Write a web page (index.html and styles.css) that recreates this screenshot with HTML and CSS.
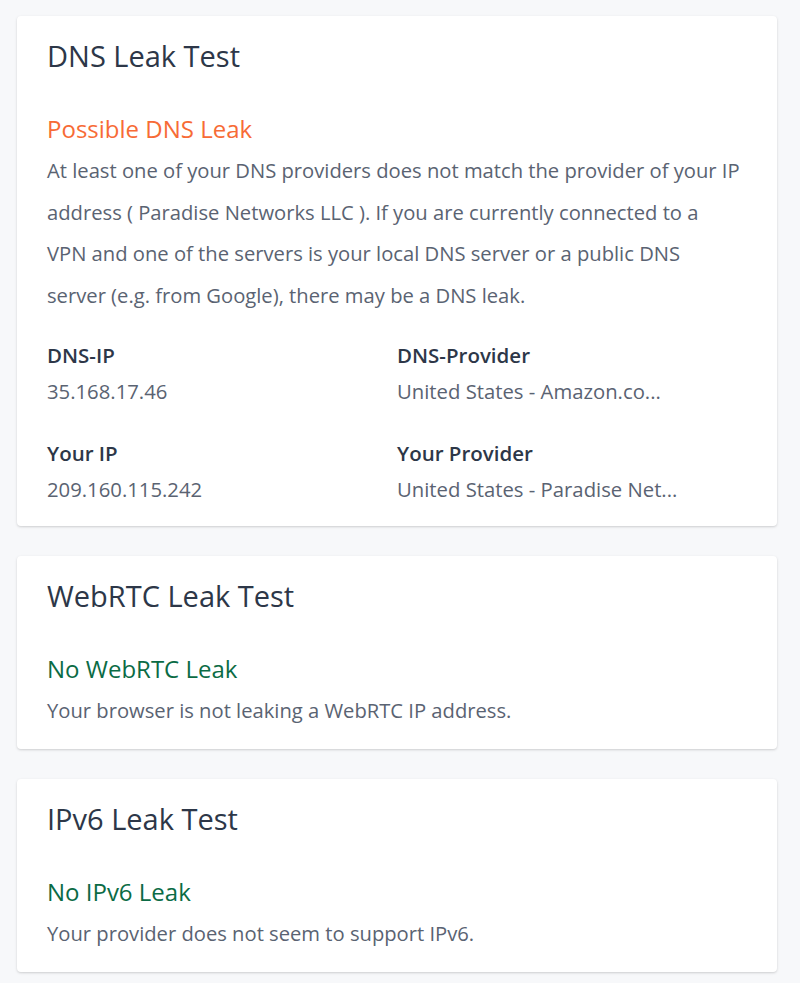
FILE: index.html
```html
<!DOCTYPE html>
<html lang="en">
<head>
<meta charset="utf-8">
<title>Leak Tests</title>
<link rel="stylesheet" href="styles.css">
</head>
<body>
<main class="page">
  <section class="card">
    <h2 class="card-title">DNS Leak Test</h2>
    <h3 class="status status-warn">Possible DNS Leak</h3>
    <p class="text">At least one of your DNS providers does not match the provider of your IP<br>address ( Paradise Networks LLC ). If you are currently connected to a<br>VPN and one of the servers is your local DNS server or a public DNS<br>server (e.g. from Google), there may be a DNS leak.</p>
    <div class="grid">
      <div class="item">
        <div class="label">DNS-IP</div>
        <div class="value">35.168.17.46</div>
      </div>
      <div class="item">
        <div class="label">DNS-Provider</div>
        <div class="value">United States - Amazon.co...</div>
      </div>
      <div class="item">
        <div class="label">Your IP</div>
        <div class="value">209.160.115.242</div>
      </div>
      <div class="item">
        <div class="label">Your Provider</div>
        <div class="value">United States - Paradise Net...</div>
      </div>
    </div>
  </section>
  <section class="card">
    <h2 class="card-title">WebRTC Leak Test</h2>
    <h3 class="status status-ok">No WebRTC Leak</h3>
    <p class="text">Your browser is not leaking a WebRTC IP address.</p>
  </section>
  <section class="card">
    <h2 class="card-title">IPv6 Leak Test</h2>
    <h3 class="status status-ok">No IPv6 Leak</h3>
    <p class="text">Your provider does not seem to support IPv6.</p>
  </section>
</main>
</body>
</html>
```
FILE: styles.css
```css
* { box-sizing: border-box; }
html, body {
  margin: 0;
  padding: 0;
  background: #f7f8fa;
  font-family: "Open Sans", "Noto Sans", sans-serif;
  color: #2d3748;
}
.page {
  display: flex;
  flex-direction: column;
  gap: 30px;
  padding: 16px 23px 13px 17px;
}
.card {
  background: #fff;
  border-radius: 4px;
  box-shadow: 0 1px 3px rgba(0,0,0,0.12), 0 1px 2px rgba(0,0,0,0.06);
  padding: 22px 30px 17px;
}
.card-title {
  margin: 0;
  font-size: 29px;
  font-weight: 500;
  line-height: 36px;
  color: #2d3748;
}
.status {
  margin: 40px 0 0;
  font-size: 24px;
  font-weight: 500;
  line-height: 30px;
}
.status-warn { color: #f76b36; }
.status-ok { color: #0b6b45; }
.text {
  margin: 6px 0 0;
  font-size: 20.2px;
  line-height: 41.6px;
  color: #5a6372;
}
.grid {
  display: grid;
  grid-template-columns: 1fr 1fr;
  row-gap: 32px;
  margin: 24px 0 5px;
}
.label {
  font-size: 20.5px;
  font-weight: 600;
  line-height: 30px;
  color: #2d3748;
}
.value {
  margin-top: 6px;
  font-size: 20.3px;
  line-height: 30px;
  color: #5a6372;
}
```
